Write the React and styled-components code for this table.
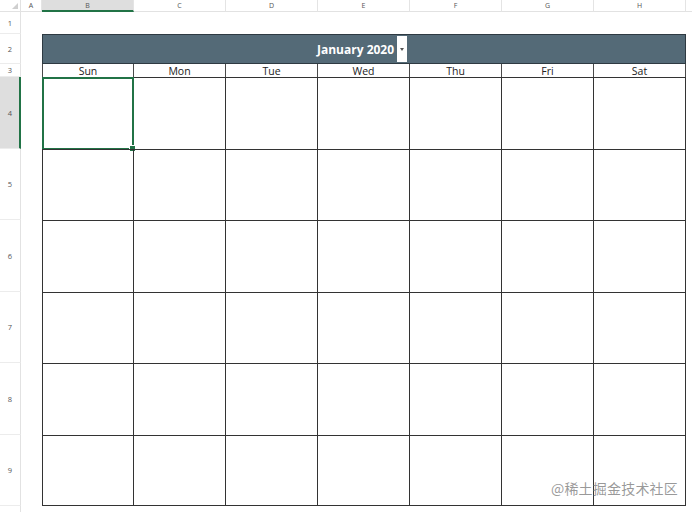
import React from "react";
import styled, { createGlobalStyle } from "styled-components";

const Global = createGlobalStyle`
  html, body { margin: 0; padding: 0; background: #fff; }
  body { font-family: "Open Sans", "Noto Sans", sans-serif; overflow: hidden; }
`;

const ROWS = [
  { n: 1, h: 22 },
  { n: 2, h: 30 },
  { n: 3, h: 13 },
  { n: 4, h: 72 },
  { n: 5, h: 71 },
  { n: 6, h: 72 },
  { n: 7, h: 71 },
  { n: 8, h: 72 },
  { n: 9, h: 71 },
  { n: 10, h: 20 },
];
const COLS = ["A", "B", "C", "D", "E", "F", "G", "H"];
const DAYS = ["Sun", "Mon", "Tue", "Wed", "Thu", "Fri", "Sat"];

const Sheet = styled.div`
  display: grid;
  width: 692px;
  height: 512px;
  overflow: hidden;
  grid-template-columns: 21px 21px repeat(7, 92px) 1fr;
  grid-template-rows: 12px ${ROWS.map((r) => r.h + "px").join(" ")};
  position: relative;
`;

const Corner = styled.div`
  grid-column: 1;
  grid-row: 1;
  border-right: 1px solid #e2e2e2;
  border-bottom: 1px solid #e2e2e2;
  position: relative;
  &::after {
    content: "";
    position: absolute;
    right: 2px;
    bottom: 2px;
    border-style: solid;
    border-width: 0 0 6px 6px;
    border-color: transparent transparent #cfcfcf transparent;
  }
`;

const ColHead = styled.div`
  grid-row: 1;
  grid-column: ${(p) => p.$col};
  display: flex;
  align-items: center;
  justify-content: center;
  font-size: 7px;
  color: #555;
  background: ${(p) => (p.$active ? "#dedede" : "#fff")};
  border-right: 1px solid #e4e4e4;
  border-bottom: ${(p) => (p.$active ? "2px solid #217346" : "1px solid #e2e2e2")};
  box-sizing: border-box;
`;

const ColFill = styled.div`
  grid-row: 1;
  grid-column: 10;
  border-bottom: 1px solid #e2e2e2;
`;

const RowHead = styled.div`
  grid-column: 1;
  grid-row: ${(p) => p.$row};
  display: flex;
  align-items: ${(p) => (p.$clip ? "flex-start" : "center")};
  padding-top: ${(p) => (p.$clip ? "4px" : "0")};
  justify-content: center;
  font-size: 7.5px;
  color: #555;
  background: ${(p) => (p.$active ? "#dedede" : "#fff")};
  border-right: ${(p) => (p.$active ? "2px solid #217346" : "1px solid #e2e2e2")};
  border-bottom: 1px solid #ececec;
  box-sizing: border-box;
  padding-left: ${(p) => (p.$active ? "1px" : "0")};
`;

const Title = styled.div`
  grid-column: 3 / span 7;
  grid-row: 3;
  background: #546a77;
  border: 1px solid #2e3a42;
  box-sizing: border-box;
  display: flex;
  align-items: center;
  justify-content: flex-start;
  padding-left: 274px;
  gap: 3px;
`;

const TitleText = styled.span`
  color: #fff;
  font-weight: 700;
  font-size: 12px;
`;

const Dropdown = styled.span`
  width: 10px;
  align-self: stretch;
  background: #fff;
  display: flex;
  align-items: center;
  justify-content: center;
  margin: 1px 0;
  &::after {
    content: "";
    border-style: solid;
    border-width: 3px 2.5px 0 2.5px;
    border-color: #555 transparent transparent transparent;
  }
`;

const DayHead = styled.div`
  grid-row: 4;
  grid-column: ${(p) => p.$col};
  display: flex;
  align-items: center;
  justify-content: center;
  padding-top: 1px;
  font-size: 10.5px;
  color: #222;
  border-right: 1px solid #4a4a4a;
  border-left: ${(p) => (p.$first ? "1px solid #4a4a4a" : "none")};
  box-sizing: border-box;
  line-height: 1;
`;

const Cell = styled.div`
  grid-row: ${(p) => p.$row};
  grid-column: ${(p) => p.$col};
  border-top: 1px solid #333;
  border-right: 1px solid #333;
  border-left: ${(p) => (p.$first ? "1px solid #333" : "none")};
  border-bottom: ${(p) => (p.$last ? "1px solid #333" : "none")};
  box-sizing: border-box;
  position: relative;
`;

const Selection = styled.div`
  position: absolute;
  left: -1px;
  top: -1px;
  right: -1px;
  bottom: -1px;
  border: 2px solid #217346;
  &::after {
    content: "";
    position: absolute;
    right: -4px;
    bottom: -4px;
    width: 5px;
    height: 5px;
    background: #217346;
    border: 1px solid #fff;
  }
`;

const Watermark = styled.div`
  position: absolute;
  right: 14px;
  bottom: 14px;
  font-family: "Noto Sans CJK SC", "Noto Sans", sans-serif;
  font-size: 14px;
  color: rgba(120, 120, 120, 0.75);
  letter-spacing: 0.2px;
`;

export default function App() {
  return (
    <>
      <Global />
      <Sheet>
        <Corner />
        {COLS.map((c, i) => (
          <ColHead key={c} $col={i + 2} $active={c === "B"}>
            {c}
          </ColHead>
        ))}
        <ColFill />
        {ROWS.map((r, i) => (
          <RowHead key={r.n} $row={i + 2} $active={r.n === 4} $clip={r.n === 10}>
            {r.n}
          </RowHead>
        ))}
        <Title>
          <TitleText>January 2020</TitleText>
          <Dropdown />
        </Title>
        {DAYS.map((d, i) => (
          <DayHead key={d} $col={i + 3} $first={i === 0}>
            {d}
          </DayHead>
        ))}
        {[0, 1, 2, 3, 4, 5].map((w) =>
          DAYS.map((d, i) => (
            <Cell key={w + d} $row={w + 5} $col={i + 3} $first={i === 0} $last={w === 5}>
              {w === 0 && i === 0 && <Selection />}
            </Cell>
          ))
        )}
        <Watermark>@稀土掘金技术社区</Watermark>
      </Sheet>
    </>
  );
}
